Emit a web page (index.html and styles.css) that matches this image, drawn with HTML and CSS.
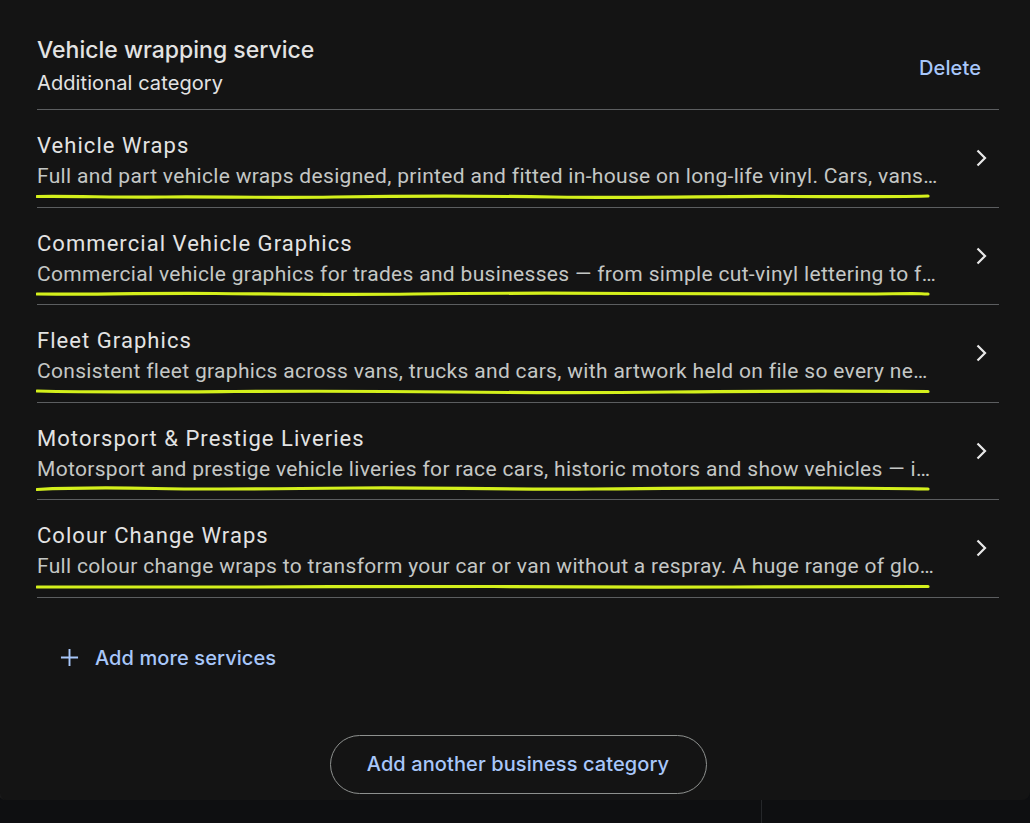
FILE: index.html
```html
<!DOCTYPE html>
<html lang="en">
<head>
  <meta charset="UTF-8">
  <title>Business category services</title>
  <link rel="stylesheet" href="styles.css">
</head>
<body>

<div class="catpanel">
  <div class="catpanel-head">
    <div class="catpanel-titles">
      <div class="catpanel-title">Vehicle wrapping service</div>
      <div class="catpanel-sub">Additional category</div>
    </div>
    <span class="catpanel-delete">Delete</span>
  </div>

  <div class="svc-list">
    <div class="svc-row">
      <div class="svc-text">
        <div class="svc-name">Vehicle Wraps</div>
        <div class="svc-desc">Full and part vehicle wraps designed, printed and fitted in-house on long-life vinyl. Cars, vans, trucks and more, with a finish that protects the paintwork underneath.</div>
      </div>
      <svg class="svc-chev" viewBox="0 0 24 24"><path d="M8.5 4.5 16 12l-7.5 7.5"/></svg>
      <svg class="svc-mark" viewBox="0 0 900 8" preserveAspectRatio="none"><path d="M1 3.5C40 3 80 4.5 130 4 S230 5 300 4 S420 2.5 520 4 S680 3 760 3.5 S860 4 897 3"/></svg>
    </div>

    <div class="svc-row">
      <div class="svc-text">
        <div class="svc-name">Commercial Vehicle Graphics</div>
        <div class="svc-desc">Commercial vehicle graphics for trades and businesses — from simple cut-vinyl lettering to full printed panels that turn every journey into advertising.</div>
      </div>
      <svg class="svc-chev" viewBox="0 0 24 24"><path d="M8.5 4.5 16 12l-7.5 7.5"/></svg>
      <svg class="svc-mark" viewBox="0 0 900 8" preserveAspectRatio="none"><path d="M1 4C50 4.5 110 3 180 3.5 S300 5 380 4 S520 3 600 3.5 S760 4.5 830 4 S880 3.5 897 4"/></svg>
    </div>

    <div class="svc-row">
      <div class="svc-text">
        <div class="svc-name">Fleet Graphics</div>
        <div class="svc-desc">Consistent fleet graphics across vans, trucks and cars, with artwork held on file so every new vehicle matches the rest of the fleet exactly.</div>
      </div>
      <svg class="svc-chev" viewBox="0 0 24 24"><path d="M8.5 4.5 16 12l-7.5 7.5"/></svg>
      <svg class="svc-mark" viewBox="0 0 900 8" preserveAspectRatio="none"><path d="M1 3C60 4.5 120 4 200 3.5 S330 3 420 4 S560 5 640 4 S800 3 897 3.5"/></svg>
    </div>

    <div class="svc-row">
      <div class="svc-text">
        <div class="svc-name">Motorsport &amp; Prestige Liveries</div>
        <div class="svc-desc">Motorsport and prestige vehicle liveries for race cars, historic motors and show vehicles — including design, print and fitting by experienced installers.</div>
      </div>
      <svg class="svc-chev" viewBox="0 0 24 24"><path d="M8.5 4.5 16 12l-7.5 7.5"/></svg>
      <svg class="svc-mark" viewBox="0 0 900 8" preserveAspectRatio="none"><path d="M1 4.5C30 3 70 2.5 120 3.5 S240 4 320 3 S460 5 560 4 S720 2.5 800 3 S870 3.5 897 4"/></svg>
    </div>

    <div class="svc-row">
      <div class="svc-text">
        <div class="svc-name">Colour Change Wraps</div>
        <div class="svc-desc">Full colour change wraps to transform your car or van without a respray. A huge range of gloss, satin, matte and special effect finishes to choose from.</div>
      </div>
      <svg class="svc-chev" viewBox="0 0 24 24"><path d="M8.5 4.5 16 12l-7.5 7.5"/></svg>
      <svg class="svc-mark" viewBox="0 0 900 8" preserveAspectRatio="none"><path d="M1 4C70 3.5 140 4.5 220 4 S360 3 460 3.5 S620 4.5 700 4 S850 3 897 3.5"/></svg>
    </div>
  </div>

  <div class="svc-add">
    <svg class="svc-add-icon" viewBox="0 0 20 20"><path d="M10 1v18M1 10h18"/></svg>
    <span>Add more services</span>
  </div>

  <div class="catpanel-foot">
    <span class="catpanel-btn">Add another business category</span>
  </div>
</div>

<div class="below">
  <div class="below-left"></div>
</div>

</body>
</html>
```

FILE: styles.css
```css
body {
  margin: 0;
  background: #0e0f11;
  font-family: Roboto, "Liberation Sans", sans-serif;
}

.catpanel {
  height: 800px;
  box-sizing: border-box;
  padding: 32px 31px 0 37px;
  background: #141414;
  border-radius: 0 0 8px 8px;
  border-left: 2px solid #1b1b1b;
  margin-left: -2px;
}

.catpanel-head {
  display: flex;
  align-items: center;
  justify-content: space-between;
  height: 77px;
  border-bottom: 1px solid #5c5e60;
}

.catpanel-titles {
  margin-top: -10px;
}

.catpanel-title {
  font-family: Inter, "Open Sans", sans-serif;
  font-size: 23px;
  font-weight: 500;
  line-height: 30px;
  color: #e3e3e3;
}

.catpanel-sub {
  font-family: Inter, "Open Sans", sans-serif;
  font-size: 20px;
  line-height: 28px;
  margin-top: 4px;
  color: #e3e3e3;
  letter-spacing: 0.1px;
}

.catpanel-delete {
  font-family: Inter, "Open Sans", sans-serif;
  font-size: 20px;
  font-weight: 500;
  color: #a8c7fa;
  margin-right: 18px;
  margin-top: -6px;
  letter-spacing: 0.1px;
}

.svc-row {
  position: relative;
  display: flex;
  align-items: center;
  gap: 28px;
  height: 96.5px;
  padding-right: 6px;
  border-bottom: 1px solid #5c5e60;
}

.svc-text {
  flex: 1;
  min-width: 0;
  padding-top: 6px;
}

.svc-name {
  font-size: 22px;
  line-height: 28px;
  color: #e3e3e3;
  letter-spacing: 1.05px;
}

.svc-desc {
  font-size: 21px;
  line-height: 28px;
  margin-top: 2px;
  color: #c4c7c5;
  white-space: nowrap;
  overflow: hidden;
  text-overflow: ellipsis;
  letter-spacing: 0.32px;
}

.svc-chev {
  width: 24px;
  height: 24px;
  fill: none;
  stroke: #e8e8e8;
  stroke-width: 2.2;
}

/* hand drawn marker under each description */
.svc-mark {
  position: absolute;
  left: -1px;
  bottom: 6px;
  width: 895px;
  height: 8px;
  fill: none;
  stroke: #d4f01c;
  stroke-width: 3.2;
  stroke-linecap: round;
}

.svc-add {
  display: flex;
  align-items: center;
  gap: 16px;
  margin-top: 48px;
  padding-left: 23px;
  font-family: Inter, "Open Sans", sans-serif;
  font-size: 20px;
  font-weight: 500;
  color: #a8c7fa;
  letter-spacing: 0.1px;
}

.svc-add-icon {
  width: 19px;
  height: 19px;
  stroke: #a8c7fa;
  stroke-width: 2;
  fill: none;
}

.catpanel-foot {
  display: flex;
  justify-content: center;
  margin-top: 65px;
}

.catpanel-btn {
  display: inline-flex;
  align-items: center;
  justify-content: center;
  width: 377px;
  height: 59px;
  box-sizing: border-box;
  border: 1px solid #8e918f;
  border-radius: 30px;
  font-family: Inter, "Open Sans", sans-serif;
  font-size: 20px;
  font-weight: 500;
  color: #a8c7fa;
  letter-spacing: 0.1px;
}

.below {
  height: 23px;
}

.below-left {
  width: 761px;
  height: 100%;
  border-right: 1px solid #25272a;
}
```
